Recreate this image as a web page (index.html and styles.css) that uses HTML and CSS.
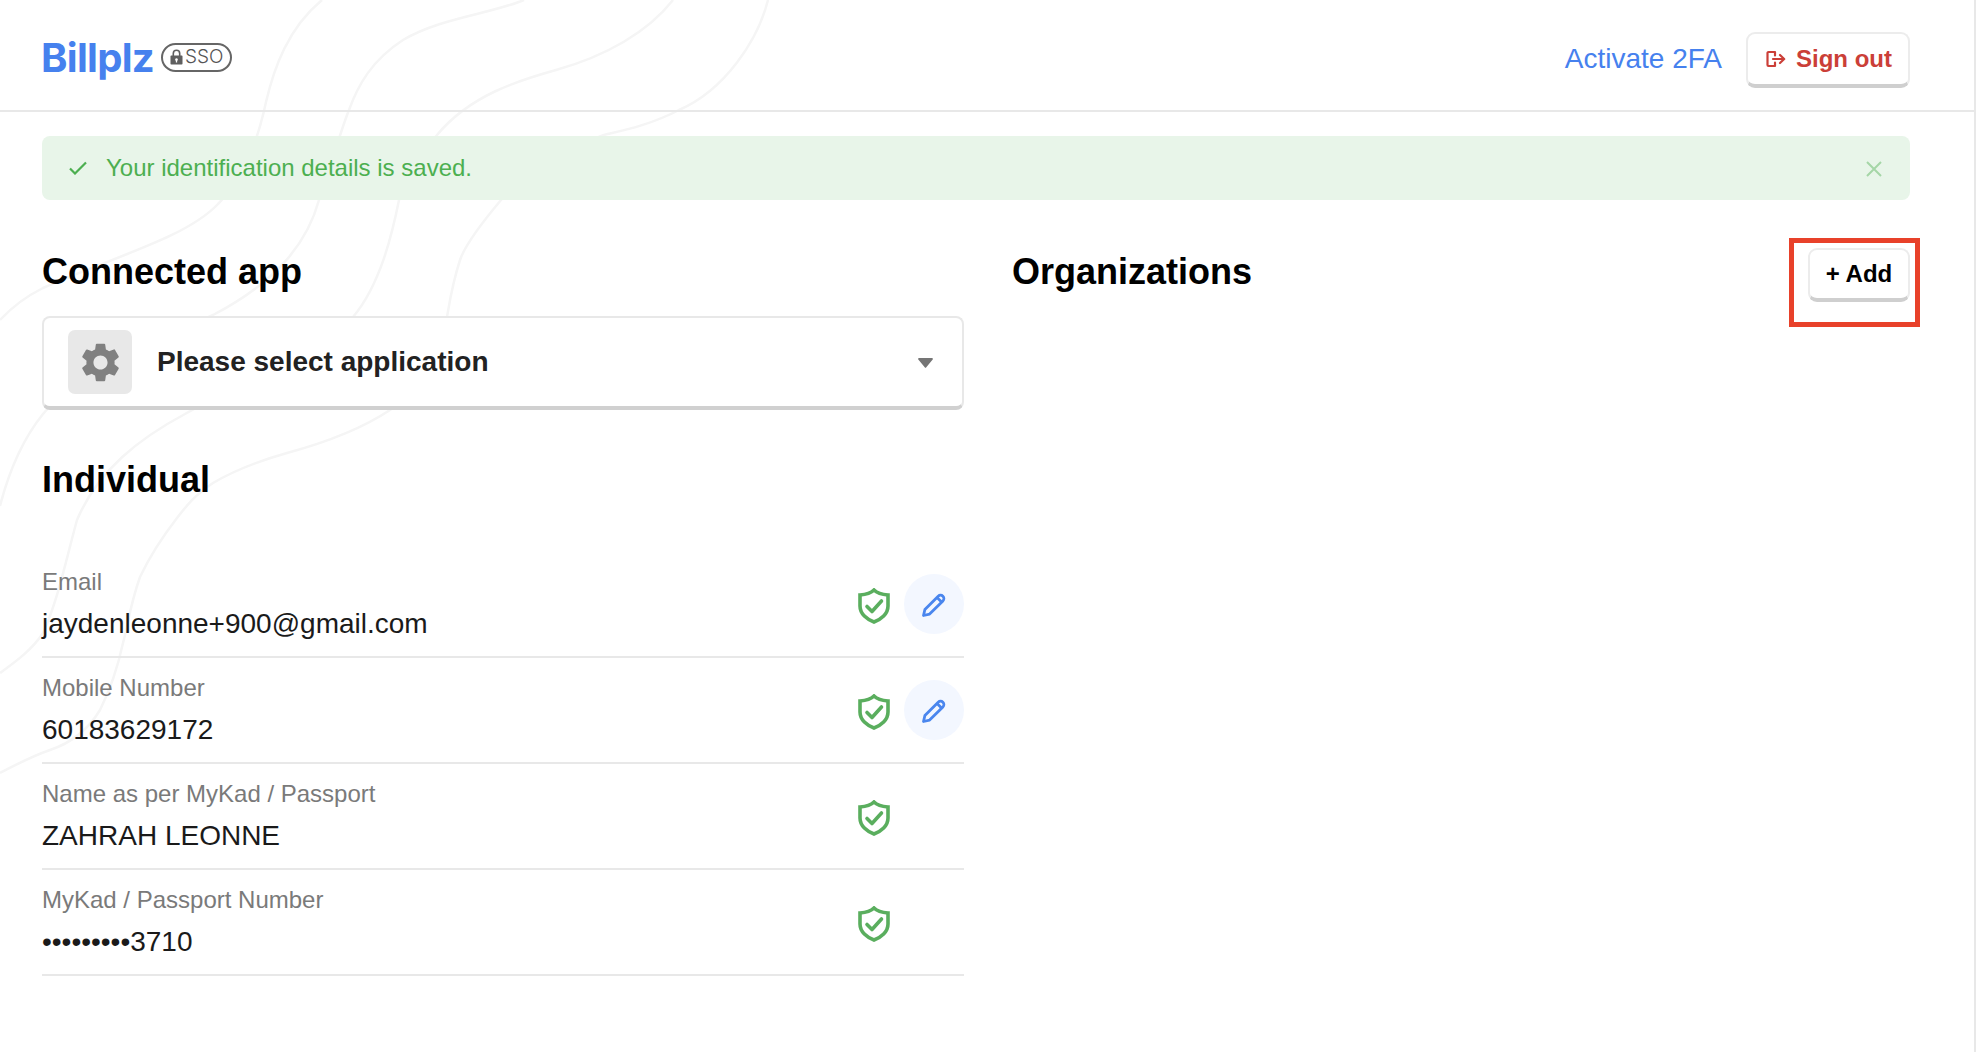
FILE: index.html
```html
<!DOCTYPE html>
<html lang="en">
<head>
<meta charset="utf-8">
<title>Billplz SSO</title>
<link rel="stylesheet" href="styles.css">
</head>
<body>
<div class="app">
  <svg class="waves" width="800" height="800" viewBox="0 0 800 800" fill="none" aria-hidden="true">
    <path d="M322 0C288 28 274 68 266 102C258 140 244 178 218 204C186 238 110 258 43 288C27 296 12 307 0 320"/>
    <path d="M524 0C490 14 440 18 403 40C372 60 358 85 349 110C340 132 330 170 319 200C308 240 280 280 213 315C150 345 75 375 43 414C22 440 8 475 0 506"/>
    <path d="M673 0C648 32 606 56 556 70C520 80 470 95 437 135C415 160 404 185 399 200C392 235 380 285 353 317C320 360 235 385 185 414C140 438 98 470 77 520C66 560 58 600 43 633C32 650 15 662 0 673"/>
    <path d="M768 0C758 40 725 90 679 110C650 125 625 130 604 135C560 150 520 175 501 200C480 225 465 245 460 260C452 285 450 300 447 317C437 360 420 392 390 410C360 430 320 444 287 453C255 462 235 470 213 483C195 495 187 505 177 518C160 540 148 560 140 577C130 605 128 625 123 643C115 680 105 700 100 710C85 735 65 745 50 750C30 757 15 765 0 773"/>
  </svg>
  <header class="topbar">
    <div class="brand">
      <span class="logo">Billplz</span>
      <span class="sso">
        <svg class="lock" viewBox="0 0 16 20" width="13" height="16"><path d="M3 8V5.5a5 5 0 0 1 10 0V8h1.500a1 1 0 0 1 1 1v9.500a1 1 0 0 1-1 1h-13a1 1 0 0 1-1-1V9a1 1 0 0 1 1-1zM5 8h6V5.500a3 3 0 0 0-6 0zM8 11.500a1.700 1.700 0 0 0-.8 3.200V17h1.600v-2.300a1.700 1.700 0 0 0-.8-3.200z" fill="#5f5f5f" fill-rule="evenodd"/></svg>
        <span class="sso-text">SSO</span>
      </span>
    </div>
    <nav class="top-actions">
      <a class="link-2fa">Activate 2FA</a>
      <button class="btn btn-signout">
        <svg viewBox="0 0 20 18" width="20" height="18" fill="none" stroke="#cb3f38" stroke-width="2.200" stroke-linecap="round" stroke-linejoin="round"><path d="M9 2H2.500A1 1 0 0 0 1.500 3v12a1 1 0 0 0 1 1H9M9 2v3.500M9 16v-3.500M7 9h11M14 5l4.200 4-4.200 4"/></svg>
        <span>Sign out</span>
      </button>
    </nav>
  </header>
  <main class="content">
    <div class="alert">
      <svg class="alert-check" viewBox="0 0 18 14" width="18" height="14" fill="none" stroke="#4caf50" stroke-width="2.200"><path d="M1 7.500l5 5L17 1.500"/></svg>
      <span class="alert-text">Your identification details is saved.</span>
      <svg class="alert-close" viewBox="0 0 16 16" width="16" height="16" fill="none" stroke="#a5d6a7" stroke-width="2"><path d="M1 1l14 14M15 1L1 15"/></svg>
    </div>
    <div class="columns">
      <section class="col">
        <h2 class="title">Connected app</h2>
        <div class="select">
          <span class="tile">
            <svg viewBox="0 0 24 24" width="47" height="47"><path fill="#808080" d="M19.140 12.940c.04-.3.06-.61.06-.94 0-.32-.02-.64-.07-.94l2.030-1.580a.49.49 0 0 0 .12-.61l-1.920-3.320a.488.488 0 0 0-.59-.22l-2.390.96c-.5-.38-1.030-.7-1.620-.94l-.36-2.540a.484.484 0 0 0-.48-.41h-3.840c-.24 0-.43.17-.47.41l-.36 2.540c-.59.24-1.130.57-1.620.94l-2.390-.96c-.22-.08-.47 0-.59.22L2.740 8.870c-.12.21-.08.47.12.61l2.030 1.580c-.05.3-.09.63-.09.94s.02.64.07.94l-2.030 1.580a.49.49 0 0 0-.12.61l1.920 3.320c.12.22.37.29.59.22l2.390-.96c.5.38 1.030.7 1.620.94l.36 2.540c.05.24.24.41.48.41h3.840c.24 0 .44-.17.47-.41l.36-2.540c.59-.24 1.130-.56 1.620-.94l2.390.96c.22.08.47 0 .59-.22l1.920-3.320c.12-.22.07-.47-.12-.61l-2.010-1.580zM12 15.600c-1.980 0-3.600-1.620-3.600-3.600s1.620-3.600 3.600-3.600 3.600 1.620 3.600 3.600-1.620 3.600-3.600 3.600z"/></svg>
          </span>
          <span class="select-text">Please select application</span>
          <svg class="caret" viewBox="0 0 15 10" width="15" height="10"><path d="M1 0h13a1 1 0 0 1 .7 1.600L8.300 9.300a1 1 0 0 1-1.600 0L.3 1.600A1 1 0 0 1 1 0z" fill="#757575"/></svg>
        </div>
        <h2 class="title title-individual">Individual</h2>
        <div class="rows">
          <div class="row">
            <div class="field"><div class="label">Email</div><div class="value">jaydenleonne+900@gmail.com</div></div>
            <div class="row-actions">
              <svg class="shield" viewBox="0 0 32 36" width="32" height="36" fill="none" stroke="#5aae5e" stroke-width="3.600"><path d="M16 2C19 5 24 6.500 30 7V18C30 26 23 31.500 16 34C9 31.500 2 26 2 18V7C8 6.500 13 5 16 2Z"/><path d="M9 18.500l5 5 9.500-10.500" stroke-linecap="round" stroke-linejoin="round"/></svg>
              <span class="edit"><svg class="pencil" viewBox="0 0 24 24" width="24" height="24" fill="none" stroke="#4a86ee" stroke-width="2.800" stroke-linejoin="round"><path d="M1.500 22.500l1.400-6L16.200 3.200a3.300 3.300 0 0 1 4.700 4.700L7.600 21.100z"/><path d="M15 4.500l4.600 4.600"/></svg></span>
            </div>
          </div>
          <div class="row">
            <div class="field"><div class="label">Mobile Number</div><div class="value">60183629172</div></div>
            <div class="row-actions">
              <svg class="shield" viewBox="0 0 32 36" width="32" height="36" fill="none" stroke="#5aae5e" stroke-width="3.600"><path d="M16 2C19 5 24 6.500 30 7V18C30 26 23 31.500 16 34C9 31.500 2 26 2 18V7C8 6.500 13 5 16 2Z"/><path d="M9 18.500l5 5 9.500-10.500" stroke-linecap="round" stroke-linejoin="round"/></svg>
              <span class="edit"><svg class="pencil" viewBox="0 0 24 24" width="24" height="24" fill="none" stroke="#4a86ee" stroke-width="2.800" stroke-linejoin="round"><path d="M1.500 22.500l1.400-6L16.200 3.200a3.300 3.300 0 0 1 4.700 4.700L7.600 21.100z"/><path d="M15 4.500l4.600 4.600"/></svg></span>
            </div>
          </div>
          <div class="row">
            <div class="field"><div class="label">Name as per MyKad / Passport</div><div class="value">ZAHRAH LEONNE</div></div>
            <div class="row-actions">
              <svg class="shield" viewBox="0 0 32 36" width="32" height="36" fill="none" stroke="#5aae5e" stroke-width="3.600"><path d="M16 2C19 5 24 6.500 30 7V18C30 26 23 31.500 16 34C9 31.500 2 26 2 18V7C8 6.500 13 5 16 2Z"/><path d="M9 18.500l5 5 9.500-10.500" stroke-linecap="round" stroke-linejoin="round"/></svg>
              <span class="edit-spacer"></span>
            </div>
          </div>
          <div class="row">
            <div class="field"><div class="label">MyKad / Passport Number</div><div class="value">•••••••••3710</div></div>
            <div class="row-actions">
              <svg class="shield" viewBox="0 0 32 36" width="32" height="36" fill="none" stroke="#5aae5e" stroke-width="3.600"><path d="M16 2C19 5 24 6.500 30 7V18C30 26 23 31.500 16 34C9 31.500 2 26 2 18V7C8 6.500 13 5 16 2Z"/><path d="M9 18.500l5 5 9.500-10.500" stroke-linecap="round" stroke-linejoin="round"/></svg>
              <span class="edit-spacer"></span>
            </div>
          </div>
        </div>
      </section>
      <section class="col">
        <div class="org-head">
          <h2 class="title">Organizations</h2>
          <div class="add-wrap">
            <button class="btn btn-add">+ Add</button>
            <span class="highlight"></span>
          </div>
        </div>
      </section>
    </div>
  </main>
</div>
</body>
</html>
```
FILE: styles.css
```css
* { box-sizing: border-box; }
html, body { margin: 0; padding: 0; background: #fff; }
body { font-family: "Liberation Sans", Arial, sans-serif; color: #1f1f1f; }
.app { position: relative; width: 1976px; height: 1052px; border-right: 2px solid #e8e8e8; overflow: hidden; }
.waves { position: absolute; left: 0; top: 0; z-index: 0; }
.waves path { stroke: #f5f5f5; stroke-width: 2.5; }
.topbar, .content { position: relative; z-index: 1; }

.topbar { height: 112px; border-bottom: 2px solid #e8e8e8; padding: 0 64px 0 41px; display: flex; justify-content: space-between; align-items: center; }
.brand { display: flex; align-items: center; gap: 7px; margin-top: 6px; }
.logo { font-family: Inter, sans-serif; font-weight: 700; font-size: 40px; line-height: 46px; letter-spacing: -0.7px; color: #4681ee; }
.sso { display: inline-flex; align-items: center; gap: 2px; height: 29px; padding: 0 6px 0 7px; border: 2px solid #666; border-radius: 15px; margin-top: -2px; }
.sso-text { font-family: Inter, sans-serif; font-weight: 300; font-size: 19px; line-height: 24px; color: #555; }
.lock { display: block; }

.top-actions { display: flex; align-items: center; gap: 24px; margin-top: 10px; }
.link-2fa { font-size: 28px; color: #4681ee; margin-top: -2px; }
.btn { display: inline-flex; align-items: center; justify-content: center; background: #fff; border: 2px solid #ececec; border-bottom: 4px solid #cfcfcf; border-radius: 9px; font-family: inherit; font-weight: 700; padding: 0; }
.btn-signout { width: 164px; height: 56px; gap: 10px; font-size: 24px; color: #cb3f38; padding-left: 2px; }
.btn-add { width: 102px; height: 54px; font-size: 24px; color: #000; }

.content { padding: 24px 64px 0 42px; }
.alert { height: 64px; background: #e8f5e9; border-radius: 8px; display: flex; align-items: center; padding: 0 28px 0 27px; }
.alert-text { flex: 1; margin-left: 19px; font-size: 24px; color: #4caf50; }
.alert-close { margin-top: 2px; }

.columns { display: grid; grid-template-columns: 922px 1fr; gap: 48px; margin-top: 36px; }
.title { margin: 0; font-size: 36px; font-weight: 700; line-height: 72px; color: #000; }
.title-individual { margin-top: 34px; }

.select { margin-top: 8px; height: 94px; background: #fff; border: 2px solid #e8e8e8; border-bottom: 4px solid #d0d0d0; border-radius: 8px; display: flex; align-items: center; padding: 0 28px 0 24px; }
.tile { width: 64px; height: 64px; background: #e8e8e8; border-radius: 7px; display: flex; align-items: center; justify-content: center; }
.select-text { flex: 1; margin-left: 25px; font-size: 28px; font-weight: 700; color: #222; }
.caret { margin-top: 2px; margin-right: 1px; }

.rows { margin-top: 36px; }
.row { height: 106px; border-bottom: 2px solid #e8e8e8; display: flex; justify-content: space-between; align-items: center; }
.field { padding-top: 2px; }
.label { font-size: 24px; line-height: 32px; color: #7a7a7a; }
.value { margin-top: 6px; font-size: 28px; line-height: 40px; color: #1a1a1a; }
.row-actions { display: flex; align-items: center; gap: 14px; }
.shield { margin-top: 3px; }
.pencil { margin-top: 2px; }
.edit, .edit-spacer { width: 60px; height: 60px; border-radius: 50%; }
.edit { background: #f3f7ff; display: flex; align-items: center; justify-content: center; }

.org-head { display: flex; justify-content: space-between; align-items: flex-start; }
.add-wrap { position: relative; margin-top: 12px; }
.highlight { position: absolute; left: -19px; right: -10px; top: -10px; bottom: -25px; border: 5px solid #e8412a; pointer-events: none; }
```
